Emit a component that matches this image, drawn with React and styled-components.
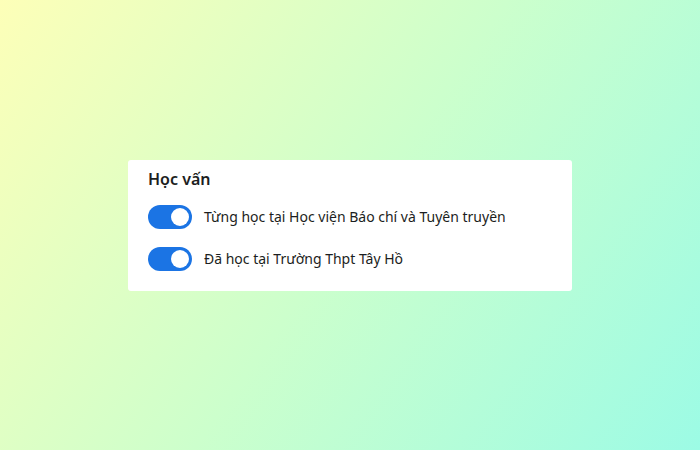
import React, { useState } from "react";
import styled, { createGlobalStyle } from "styled-components";

const GlobalStyle = createGlobalStyle`
  html, body {
    margin: 0;
    height: 100%;
  }
  body {
    font-family: "Noto Sans", "Open Sans", sans-serif;
    color: #222;
  }
  #root {
    height: 100%;
  }
`;

const Page = styled.div`
  height: 100%;
  display: flex;
  align-items: center;
  justify-content: center;
  background: linear-gradient(125deg, #fdffb8 0%, #ccffcc 50%, #9cfbe5 100%);
`;

const Card = styled.section`
  width: 444px;
  box-sizing: border-box;
  padding: 8px 20px 20px;
  background: #fff;
  border-radius: 3px;
`;

const Title = styled.h3`
  margin: 0 0 15px;
  font-size: 16px;
  line-height: 22px;
  font-weight: 600;
  color: #1c1e21;
`;

const Row = styled.label`
  display: flex;
  align-items: center;
  gap: 12px;
  height: 24px;
  cursor: pointer;
  & + & {
    margin-top: 18px;
  }
`;

const Track = styled.span`
  position: relative;
  width: 44px;
  height: 24px;
  border-radius: 12px;
  flex-shrink: 0;
  background: ${(p) => (p.$on ? "#1b74e4" : "#ccd0d5")};
  transition: background 0.2s;
`;

const Knob = styled.span`
  position: absolute;
  top: 3px;
  left: ${(p) => (p.$on ? "23px" : "3px")};
  width: 18px;
  height: 18px;
  border-radius: 50%;
  background: #fff;
  transition: left 0.2s;
`;

const Label = styled.span`
  font-size: 14px;
  color: #1c1e21;
`;

function Toggle({ on, onChange, children }) {
  return (
    <Row onClick={onChange}>
      <Track $on={on}>
        <Knob $on={on} />
      </Track>
      <Label>{children}</Label>
    </Row>
  );
}

export default function App() {
  const [items, setItems] = useState([
    { text: "Từng học tại Học viện Báo chí và Tuyên truyền", on: true },
    { text: "Đã học tại Trường Thpt Tây Hồ", on: true },
  ]);

  const flip = (i) =>
    setItems((old) => old.map((it, j) => (j === i ? { ...it, on: !it.on } : it)));

  return (
    <Page>
      <GlobalStyle />
      <Card>
        <Title>Học vấn</Title>
        {items.map((it, i) => (
          <Toggle key={i} on={it.on} onChange={() => flip(i)}>
            {it.text}
          </Toggle>
        ))}
      </Card>
    </Page>
  );
}
